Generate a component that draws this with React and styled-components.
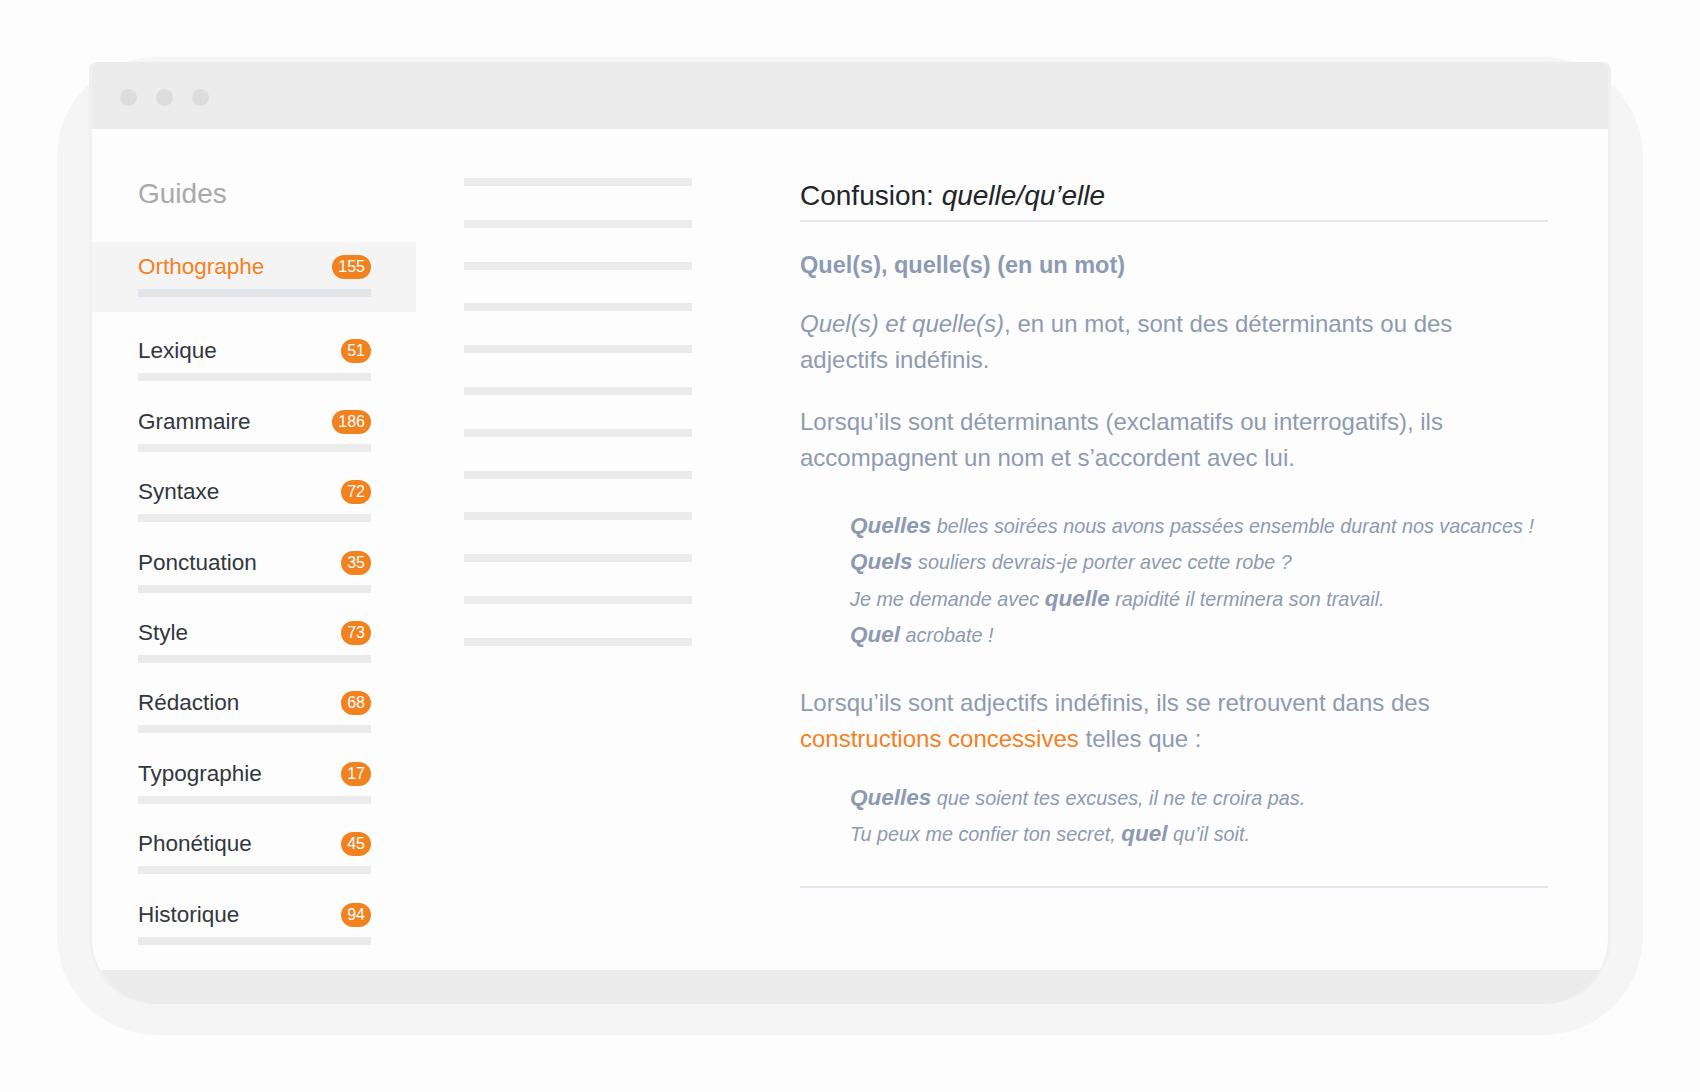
import React from 'react';
import styled, { createGlobalStyle } from 'styled-components';

const guides = [
  { name: 'Orthographe', count: 155, active: true },
  { name: 'Lexique', count: 51 },
  { name: 'Grammaire', count: 186 },
  { name: 'Syntaxe', count: 72 },
  { name: 'Ponctuation', count: 35 },
  { name: 'Style', count: 73 },
  { name: 'Rédaction', count: 68 },
  { name: 'Typographie', count: 17 },
  { name: 'Phonétique', count: 45 },
  { name: 'Historique', count: 94 },
];

const placeholders = Array.from({ length: 12 }, (_, i) => i);

export default function App() {
  return (
    <>
      <GlobalStyle />
      <Page>
        <Frame>
          <Window>
            <TitleBar>
              <Dot />
              <Dot />
              <Dot />
            </TitleBar>
            <Content>
              <Sidebar>
                <SidebarTitle>Guides</SidebarTitle>
                <GuideList>
                  {guides.map((g) => (
                    <GuideItem key={g.name} $active={g.active}>
                      <GuideRow>
                        <GuideName $active={g.active}>{g.name}</GuideName>
                        <Badge>{g.count}</Badge>
                      </GuideRow>
                      <GuideBar $active={g.active} />
                    </GuideItem>
                  ))}
                </GuideList>
              </Sidebar>

              <ListColumn>
                {placeholders.map((i) => (
                  <PlaceholderLine key={i} />
                ))}
              </ListColumn>

              <Article>
                <Title>
                  Confusion: <em>quelle/qu’elle</em>
                </Title>
                <SubHeading>Quel(s), quelle(s) (en un mot)</SubHeading>
                <Paragraph>
                  <em>Quel(s) et quelle(s)</em>, en un mot, sont des déterminants ou des
                  <br />
                  adjectifs indéfinis.
                </Paragraph>
                <Paragraph>
                  Lorsqu’ils sont déterminants (exclamatifs ou interrogatifs), ils
                  <br />
                  accompagnent un nom et s’accordent avec lui.
                </Paragraph>
                <Examples>
                  <ExampleLine>
                    <Key>Quelles</Key> belles soirées nous avons passées ensemble durant nos vacances !
                  </ExampleLine>
                  <ExampleLine>
                    <Key>Quels</Key> souliers devrais-je porter avec cette robe ?
                  </ExampleLine>
                  <ExampleLine>
                    Je me demande avec <Key>quelle</Key> rapidité il terminera son travail.
                  </ExampleLine>
                  <ExampleLine>
                    <Key>Quel</Key> acrobate !
                  </ExampleLine>
                </Examples>
                <Paragraph $top={31}>
                  Lorsqu’ils sont adjectifs indéfinis, ils se retrouvent dans des
                  <br />
                  <Highlight>constructions concessives</Highlight> telles que :
                </Paragraph>
                <Examples $top={23}>
                  <ExampleLine>
                    <Key>Quelles</Key> que soient tes excuses, il ne te croira pas.
                  </ExampleLine>
                  <ExampleLine>
                    Tu peux me confier ton secret, <Key>quel</Key> qu’il soit.
                  </ExampleLine>
                </Examples>
                <EndRule />
              </Article>
            </Content>
          </Window>
        </Frame>
      </Page>
    </>
  );
}

const GlobalStyle = createGlobalStyle`
  html, body {
    margin: 0;
    padding: 0;
    background: #fdfdfd;
  }
  body {
    font-family: "Liberation Sans", Arial, sans-serif;
  }
`;

const Page = styled.div`
  width: 1700px;
  height: 1092px;
  padding: 57px 0 0 57px;
  box-sizing: border-box;
  background: #fdfdfd;
`;

const Frame = styled.div`
  width: 1586px;
  height: 978px;
  box-sizing: border-box;
  padding: 5px 35px 0;
  background: #f5f5f5;
  border-radius: 100px;
`;

const Window = styled.div`
  height: 942px;
  display: flex;
  flex-direction: column;
  background: #ececec;
  border-radius: 8px 8px 66px 66px;
  overflow: hidden;
  box-shadow: -3px 0 0 #f0f0f0, 3px 0 0 #f0f0f0;
`;

const TitleBar = styled.div`
  height: 67px;
  flex: none;
  box-sizing: border-box;
  padding: 3px 0 0 28px;
  display: flex;
  align-items: center;
  gap: 19px;
`;

const Dot = styled.span`
  width: 17px;
  height: 17px;
  border-radius: 50%;
  background: #dcdcdc;
`;

const Content = styled.div`
  height: 841px;
  flex: none;
  display: flex;
  background: #fdfdfd;
  border-radius: 0 0 8px 8px;
`;

const Sidebar = styled.div`
  width: 324px;
  flex: none;
  padding-top: 48px;
`;

const SidebarTitle = styled.h2`
  margin: 0 0 0 46px;
  font-size: 28px;
  line-height: 34px;
  font-weight: 400;
  color: #a9a9a9;
`;

const GuideList = styled.ul`
  list-style: none;
  margin: 31px 0 0;
  padding: 0;
`;

const GuideItem = styled.li`
  padding: 13px 45px 15.4px 46px;
  background: ${(p) => (p.$active ? '#f4f4f4' : 'transparent')};
  margin-bottom: ${(p) => (p.$active ? '14px' : '0')};
`;

const GuideRow = styled.div`
  height: 24px;
  display: flex;
  align-items: center;
  justify-content: space-between;
`;

const GuideName = styled.span`
  font-size: 22.5px;
  color: ${(p) => (p.$active ? '#f5801f' : '#32373e')};
`;

const Badge = styled.span`
  height: 24px;
  min-width: 28px;
  box-sizing: border-box;
  padding: 0 6px;
  border-radius: 12px;
  background: #f2821f;
  color: #fff;
  font-size: 16px;
  line-height: 24px;
  text-align: center;
`;

const GuideBar = styled.div`
  height: 8px;
  margin-top: 10px;
  background: ${(p) => (p.$active ? '#e2e6ea' : '#ebebeb')};
`;

const ListColumn = styled.div`
  width: 228px;
  flex: none;
  margin-left: 48px;
  padding-top: 49px;
  display: flex;
  flex-direction: column;
  gap: 33.8px;
`;

const PlaceholderLine = styled.div`
  height: 8px;
  background: #ebebeb;
`;

const Article = styled.div`
  width: 748px;
  flex: none;
  margin-left: 108px;
  padding-top: 50px;
  color: #8d9ab0;
`;

const Title = styled.h1`
  margin: 0;
  padding-bottom: 7px;
  border-bottom: 2px solid #e4e9ef;
  font-size: 28px;
  line-height: 34px;
  font-weight: 400;
  color: #22252a;

  em {
    font-style: italic;
  }
`;

const SubHeading = styled.h3`
  margin: 28px 0 0;
  font-size: 23.5px;
  line-height: 30px;
  font-weight: 700;
  color: #8c9ab2;
`;

const Paragraph = styled.p`
  margin: ${(p) => (p.$top ?? 26)}px 0 0;
  font-size: 24px;
  line-height: 36px;
  color: #8d9ab0;
`;

const Highlight = styled.span`
  color: #f5801f;
`;

const Examples = styled.div`
  margin: ${(p) => (p.$top ?? 32)}px 0 0 50px;
`;

const ExampleLine = styled.div`
  font-size: 19.8px;
  line-height: 35.4px;
  font-style: italic;
  color: #8d9ab0;
  white-space: nowrap;
`;

const Key = styled.strong`
  font-size: 22.5px;
  font-weight: 700;
  font-style: italic;
  color: #8c99b0;
`;

const EndRule = styled.div`
  margin-top: 34px;
  height: 2px;
  background: #e4e9ef;
`;
